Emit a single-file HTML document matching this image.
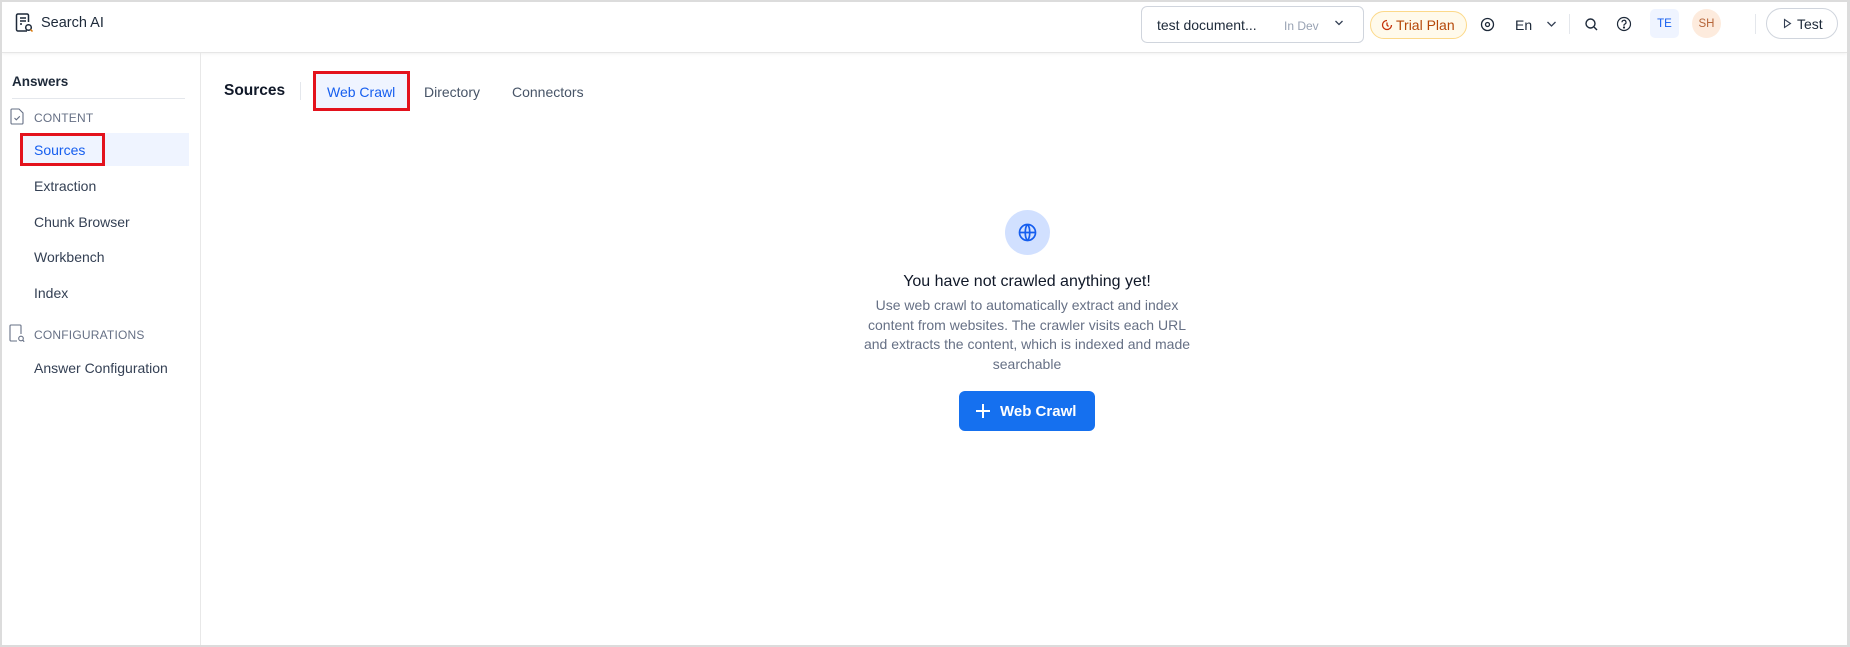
<!DOCTYPE html>
<html><head><meta charset="utf-8"><style>
*{box-sizing:border-box;margin:0;padding:0}
body{width:1850px;height:647px;overflow:hidden;background:#fff;font-family:"Liberation Sans",sans-serif;color:#101828;position:relative}
.frame{position:absolute;inset:0;border:2px solid #dcdcdc;border-right-width:3px;border-bottom-width:2px}
.abs{position:absolute}
.header{position:absolute;left:2px;top:2px;right:3px;height:51px;border-bottom:1px solid #e6e6e6;box-shadow:0 1px 3px rgba(0,0,0,.06)}
.side{position:absolute;left:2px;top:53px;width:199px;bottom:2px;border-right:1px solid #e8e8e8}
.nav{position:absolute;left:34px;font-size:14px;color:#344054}
.cap{position:absolute;left:34px;font-size:12px;color:#667085;letter-spacing:.2px}
.red{position:absolute;border:3px solid #e3121d}
.av{display:flex;align-items:center;justify-content:center;font-size:11.5px}
</style></head><body>
<div class="header"></div>
<div class="frame"></div>
<svg class="abs" style="left:15px;top:13px" width="19" height="20" viewBox="0 0 19 20" fill="none" stroke="#1d2939" stroke-width="1.5"><path d="M12 18H3a1.5 1.5 0 0 1-1.5-1.5v-14A1.5 1.5 0 0 1 3 1h9a1.5 1.5 0 0 1 1.5 1.5V9"/><path d="M5 5h6M5 8h6M5 11h2"/><circle cx="13.5" cy="14.5" r="2.8"/><path d="M15.5 16.5l2 2" stroke="#d97706"/></svg>
<div class="abs" style="left:41px;top:15px;font-size:14.5px;color:#1d2939">Search AI</div>

<div class="abs" style="left:1141px;top:6px;width:223px;height:37px;border:1px solid #d0d5dd;border-radius:6px"></div>
<div class="abs" style="left:1157px;top:17px;font-size:14px;color:#1d2939">test document...</div>
<div class="abs" style="left:1284px;top:19px;font-size:12px;color:#98a2b3">In Dev</div>
<svg class="abs" style="left:1334px;top:19px" width="10" height="8" viewBox="0 0 10 8"><path d="M1.5 2l3.5 3.5L8.5 2" stroke="#344054" stroke-width="1.3" fill="none"/></svg>
<div class="abs" style="left:1370px;top:11px;width:97px;height:28px;border:1px solid #fcd98a;background:#fffaeb;border-radius:14px"></div>
<svg class="abs" style="left:1381px;top:19px" width="12" height="12" viewBox="0 0 12 12" fill="none" stroke="#c4320a" stroke-width="1.3"><path d="M10.5 6A4.5 4.5 0 1 1 6 1.5"/><path d="M6 3.5V6l1.5 1.5"/></svg>
<div class="abs" style="left:1396px;top:17px;font-size:14px;color:#b54708">Trial Plan</div>
<svg class="abs" style="left:1480px;top:17px" width="15" height="15" viewBox="0 0 15 15" fill="none" stroke="#1d2939" stroke-width="1.3"><circle cx="7.5" cy="7.5" r="6"/><circle cx="7.5" cy="7.5" r="2"/></svg>
<div class="abs" style="left:1515px;top:17px;font-size:14px;color:#1d2939">En</div>
<svg class="abs" style="left:1546px;top:20px" width="11" height="8" viewBox="0 0 11 8"><path d="M1.5 2l4 4 4-4" stroke="#344054" stroke-width="1.3" fill="none"/></svg>
<div class="abs" style="left:1569px;top:14px;width:1px;height:20px;background:#e4e7ec"></div>
<svg class="abs" style="left:1584px;top:17px" width="15" height="15" viewBox="0 0 15 15" fill="none" stroke="#1d2939" stroke-width="1.4"><circle cx="6.5" cy="6.5" r="4.5"/><path d="M10 10l3 3"/></svg>
<svg class="abs" style="left:1616px;top:16px" width="16" height="16" viewBox="0 0 16 16" fill="none" stroke="#1d2939" stroke-width="1.2"><circle cx="8" cy="8" r="6.5"/><path d="M6 6.3a2 2 0 1 1 2.6 1.9c-.4.2-.6.5-.6.9v.6"/><circle cx="8" cy="11.5" r=".5" fill="#1d2939"/></svg>
<div class="abs av" style="left:1650px;top:9px;width:29px;height:29px;background:#eff4ff;border-radius:5px;color:#155eef">TE</div>
<div class="abs av" style="left:1692px;top:9px;width:29px;height:29px;background:#fdebdd;border-radius:50%;color:#b6663a">SH</div>
<div class="abs" style="left:1755px;top:14px;width:1px;height:20px;background:#e4e7ec"></div>
<div class="abs" style="left:1766px;top:8px;width:72px;height:31px;border:1px solid #d0d5dd;border-radius:16px"></div>
<svg class="abs" style="left:1783px;top:18px" width="9" height="11" viewBox="0 0 9 11"><path d="M1.5 1.5l6 4-6 4z" stroke="#344054" stroke-width="1.1" fill="none"/></svg>
<div class="abs" style="left:1797px;top:16px;font-size:14px;color:#1d2939">Test</div>

<div class="side"></div>
<div class="abs" style="left:12px;top:74px;font-size:13.5px;font-weight:bold;color:#1d2939">Answers</div>
<div class="abs" style="left:12px;top:98px;width:173px;height:1px;background:#e4e7ec"></div>
<svg class="abs" style="left:10px;top:108px" width="15" height="17" viewBox="0 0 15 17" fill="none" stroke="#667085" stroke-width="1.1"><path d="M2 1h7l4 4v10a1 1 0 0 1-1 1H2a1 1 0 0 1-1-1V2a1 1 0 0 1 1-1z"/><path d="M4.5 10l1.8 1.8 3.5-3.5"/></svg>
<div class="cap" style="top:111px">CONTENT</div>
<div class="abs" style="left:20px;top:133px;width:169px;height:33px;background:#eff4ff"></div>
<div class="red" style="left:20px;top:133px;width:85px;height:33px"></div>
<div class="nav" style="top:142px;color:#155eef">Sources</div>
<div class="nav" style="top:178px">Extraction</div>
<div class="nav" style="top:214px">Chunk Browser</div>
<div class="nav" style="top:249px">Workbench</div>
<div class="nav" style="top:285px">Index</div>
<svg class="abs" style="left:9px;top:324px" width="17" height="19" viewBox="0 0 17 19" fill="none" stroke="#667085" stroke-width="1.1"><path d="M8 17H2a1 1 0 0 1-1-1V2a1 1 0 0 1 1-1h9a1 1 0 0 1 1 1v8"/><circle cx="12" cy="14.5" r="2.3"/><path d="M13.7 16.2l1.5 1.5"/></svg>
<div class="cap" style="top:328px">CONFIGURATIONS</div>
<div class="nav" style="top:360px">Answer Configuration</div>

<div class="abs" style="left:224px;top:82px;font-size:15.5px;font-weight:bold;color:#101828">Sources</div>
<div class="abs" style="left:300px;top:82px;width:1px;height:18px;background:#e4e7ec"></div>
<div class="abs" style="left:314px;top:72px;width:96px;height:38px;background:#eff4ff"></div>
<div class="red" style="left:313px;top:71px;width:97px;height:40px"></div>
<div class="abs" style="left:327px;top:84px;font-size:14px;color:#155eef">Web Crawl</div>
<div class="abs" style="left:424px;top:84px;font-size:14px;color:#475467">Directory</div>
<div class="abs" style="left:512px;top:84px;font-size:14px;color:#475467">Connectors</div>

<div class="abs" style="left:1005px;top:210px;width:45px;height:45px;border-radius:50%;background:#d1e0ff"></div>
<svg class="abs" style="left:1017px;top:222px" width="21" height="21" viewBox="0 0 21 21" fill="none" stroke="#155eef" stroke-width="1.7"><circle cx="10.5" cy="10.5" r="8"/><path d="M2.5 10.5h16M10.5 2.5c-3 3-3 13 0 16M10.5 2.5c3 3 3 13 0 16"/></svg>
<div class="abs" style="left:827px;top:273px;width:400px;text-align:center;font-size:16px;color:#101828">You have not crawled anything yet!</div>
<div class="abs" style="left:857px;top:296px;width:340px;text-align:center;font-size:14px;line-height:19.5px;color:#667085">Use web crawl to automatically extract and index content from websites. The crawler visits each URL and extracts the content, which is indexed and made searchable</div>
<div class="abs" style="left:959px;top:391px;width:136px;height:40px;background:#1570ef;border-radius:6px"></div>
<svg class="abs" style="left:975px;top:403px" width="16" height="16" viewBox="0 0 16 16"><path d="M8 1v14M1 8h14" stroke="#fff" stroke-width="2"/></svg>
<div class="abs" style="left:1000px;top:403px;font-size:15px;font-weight:bold;color:#fff">Web Crawl</div>
</body></html>
